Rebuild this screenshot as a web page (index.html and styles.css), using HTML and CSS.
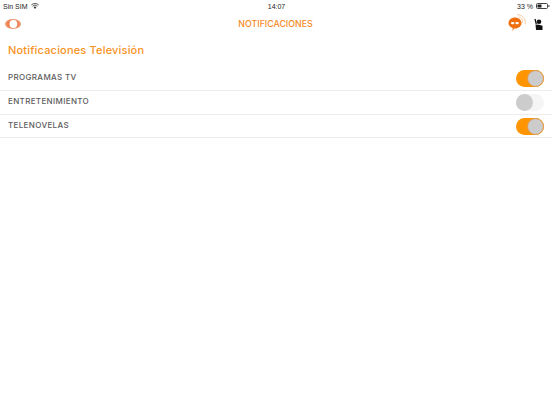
FILE: index.html
```html
<!DOCTYPE html>
<html lang="es">
<head>
<meta charset="utf-8">
<title>Notificaciones</title>
<link rel="stylesheet" href="styles.css">
</head>
<body>
<div class="status">
  <div class="status-left"><span>Sin SIM</span>
    <svg class="wifi" width="8" height="6" viewBox="0 0 8 6"><path d="M.3 2a5.300 5.300 0 0 1 7.400 0M1.500 3.200a3.600 3.600 0 0 1 5 0" fill="none" stroke="#333" stroke-width=".8"/><path d="M4 6 2.600 4.300a2 2 0 0 1 2.800 0z" fill="#333"/></svg>
  </div>
  <div class="status-mid">14:07</div>
  <div class="status-right"><span>33 %</span>
    <svg width="14" height="6" viewBox="0 0 14 6"><rect x=".5" y=".5" width="11" height="5" rx="1" fill="none" stroke="#444"/><rect x="1.500" y="1.500" width="4" height="3" fill="#222"/><rect x="12.400" y="2" width="1" height="2" fill="#444"/></svg>
  </div>
</div>
<header class="nav">
  <svg class="logo" width="16" height="10" viewBox="0 0 16 10"><ellipse cx="8" cy="5" rx="8" ry="5" fill="#ef9a73"/><ellipse cx="8.500" cy="5" rx="5" ry="4" fill="#fff"/><path d="M1.500 5c1.500-3 3-4 5-4.500C5 2 4.500 3.500 4.500 5s.5 3 2 4.500c-2-.5-3.500-1.500-5-4.500z" fill="#ee7f4e"/><path d="M14.500 5c-1-2.500-2-3.500-4-4.300 1.200 1.300 1.800 2.800 1.800 4.300s-.6 3-1.800 4.300c2-.8 3-1.800 4-4.300z" fill="#ee7f4e"/></svg>
  <div class="nav-title">NOTIFICACIONES</div>
  <div class="nav-icons">
    <svg width="18" height="19" viewBox="0 0 18 19"><path d="M9 .8a7.500 7.500 0 0 1 8 9.500M10.500 3a5 5 0 0 1 4 5.500" fill="none" stroke="#f8c9a0" stroke-width="1"/><path d="M7 3.500c3.600 0 6.500 2.400 6.500 5.500S10.600 14.500 7 14.500H6l-1.500 3 .2-3.400C2.300 13.400.5 11.400.5 9 .5 5.900 3.400 3.500 7 3.500z" fill="#f0700f"/><rect x="3" y="8" width="3.400" height="2.200" rx="1.100" fill="#fff"/><rect x="7.400" y="8" width="3.400" height="2.200" rx="1.100" fill="#fff"/></svg>
    <svg width="9" height="12" viewBox="0 0 9 12"><circle cx="5" cy="3.800" r="2.300" fill="#111"/><path d="M1.500 6.500 5 6.800l3.500 1V12H2z" fill="#111"/><path d="M1 1 2.300 6" stroke="#111" stroke-width="1.300"/></svg>
  </div>
</header>
<h1 class="heading">Notificaciones Televisión</h1>
<ul class="list">
  <li class="row"><span class="label">PROGRAMAS TV</span><span class="toggle on"><span class="knob"></span></span></li>
  <li class="row"><span class="label">ENTRETENIMIENTO</span><span class="toggle"><span class="knob"></span></span></li>
  <li class="row"><span class="label">TELENOVELAS</span><span class="toggle on"><span class="knob"></span></span></li>
</ul>
</body>
</html>
```
FILE: styles.css
```css
* { box-sizing: border-box; }
html, body { margin: 0; padding: 0; }
body { width: 552px; height: 414px; background: #fff; font-family: Inter, "Liberation Sans", sans-serif; overflow: hidden; }
.status { height: 12px; display: grid; grid-template-columns: 1fr auto 1fr; align-items: center; padding: 0 2px 0 3px; font-family: "Liberation Sans", sans-serif; font-size: 7px; color: #222; }
.status-left { display: flex; align-items: center; gap: 3px; }
.status-right { display: flex; align-items: center; gap: 3px; justify-content: flex-end; }
.nav { height: 23px; display: grid; grid-template-columns: 1fr auto 1fr; align-items: center; padding: 0 9px 0 5px; }
.logo { display: block; }
.nav-title { font-size: 8.800px; font-weight: 500; color: #f58a1f; padding-left: 3px; }
.nav-icons { display: flex; align-items: center; justify-content: flex-end; gap: 8px; }
.heading { margin: 0; padding: 7px 8px 0; height: 32px; font-size: 11px; line-height: 16px; font-weight: 500; color: #f7931e; letter-spacing: .18px; }
.list { list-style: none; margin: 0; padding: 0; }
.row { height: 24px; display: flex; align-items: center; justify-content: space-between; padding: 0 8px; border-bottom: 1px solid #ececec; font-size: 8px; font-weight: 500; color: #5c5c5c; letter-spacing: .35px; }
.row:last-child { height: 23px; }
.label { margin-bottom: 3px; }
.toggle { width: 28px; height: 17px; border-radius: 9px; background: #f5f5f5; display: flex; align-items: center; }
.toggle.on { background: #ff9500; justify-content: flex-end; }
.knob { width: 17px; height: 17px; border-radius: 50%; background: #ccc; }
.toggle.on .knob { border: 1px solid #e09a4a; }
```
